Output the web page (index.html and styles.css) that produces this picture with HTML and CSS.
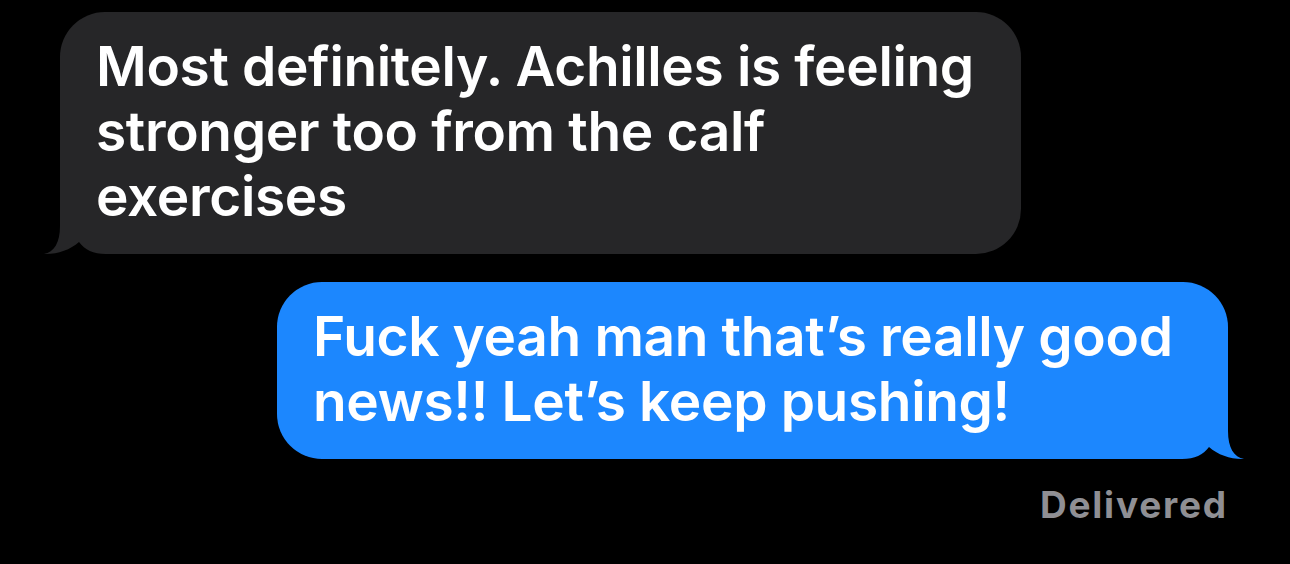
FILE: index.html
```html
<!DOCTYPE html>
<html lang="en">
<head>
<meta charset="utf-8">
<title>Messages</title>
<link rel="stylesheet" href="styles.css">
</head>
<body>
<main class="thread">
  <div class="row row-in">
    <div class="bubble bubble-in">
      <svg class="tail tail-in" viewBox="-16 -45 66 46" aria-hidden="true">
        <path class="tail-bg" d="M0,-45 H50 V1 H0 Z"/>
        <path class="tail-fill" d="M0,-45 L0,-28 C0,-11 -6,-2 -16,0 C-3,0.5 10,-4 19,-12 C25,-4 33,0 46,0 L50,0 L50,-45 Z"/>
      </svg>
      <p class="msg">Most definitely. Achilles is feeling<br>stronger too from the calf<br>exercises</p>
    </div>
  </div>
  <div class="row row-out">
    <div class="bubble bubble-out">
      <svg class="tail tail-out" viewBox="-16 -45 66 46" aria-hidden="true">
        <path class="tail-bg" d="M0,-45 H50 V1 H0 Z"/>
        <path class="tail-fill" d="M0,-45 L0,-28 C0,-11 -6,-2 -16,0 C-3,0.5 10,-4 19,-12 C25,-4 33,0 46,0 L50,0 L50,-45 Z"/>
      </svg>
      <p class="msg">Fuck yeah man that’s really good<br>news!! Let’s keep pushing!</p>
    </div>
  </div>
  <div class="status">Delivered</div>
</main>
</body>
</html>
```
FILE: styles.css
```css
html, body {
  margin: 0;
  padding: 0;
  background: #000;
}

body {
  width: 1290px;
  height: 564px;
  overflow: hidden;
  font-family: Inter, "Noto Sans", "Liberation Sans", sans-serif;
  color: #fff;
}

.thread {
  display: flex;
  flex-direction: column;
  padding-top: 12px;
}

.row {
  display: flex;
}

.row-in {
  justify-content: flex-start;
  padding-left: 60px;
}

.row-out {
  justify-content: flex-end;
  padding-right: 62px;
  margin-top: 28px;
}

.bubble {
  position: relative;
  box-sizing: border-box;
  border-radius: 45px;
  padding: 22px 36px 25px 36px;
}

.bubble-in {
  width: 961px;
  background: #262628;
}

.bubble-out {
  width: 951px;
  background: #1c87fe;
  padding-left: 36px;
}

.msg {
  position: relative;
  z-index: 1;
  margin: 0;
  font-size: 55px;
  line-height: 65px;
  font-weight: 600;
  letter-spacing: -0.35px;
  white-space: nowrap;
}

.tail {
  position: absolute;
  bottom: -1px;
  width: 66px;
  height: 46px;
  overflow: visible;
}

.tail-in {
  left: -16px;
}

.tail-out {
  right: -16px;
  transform: scaleX(-1);
}

.tail-bg {
  fill: #000;
}

.tail-in .tail-fill {
  fill: #262628;
}

.tail-out .tail-fill {
  fill: #1c87fe;
}

.status {
  align-self: flex-end;
  margin-top: 24px;
  padding-right: 62px;
  font-size: 37px;
  line-height: 44px;
  font-weight: 700;
  letter-spacing: 1.8px;
  color: #8f8f94;
}
```
